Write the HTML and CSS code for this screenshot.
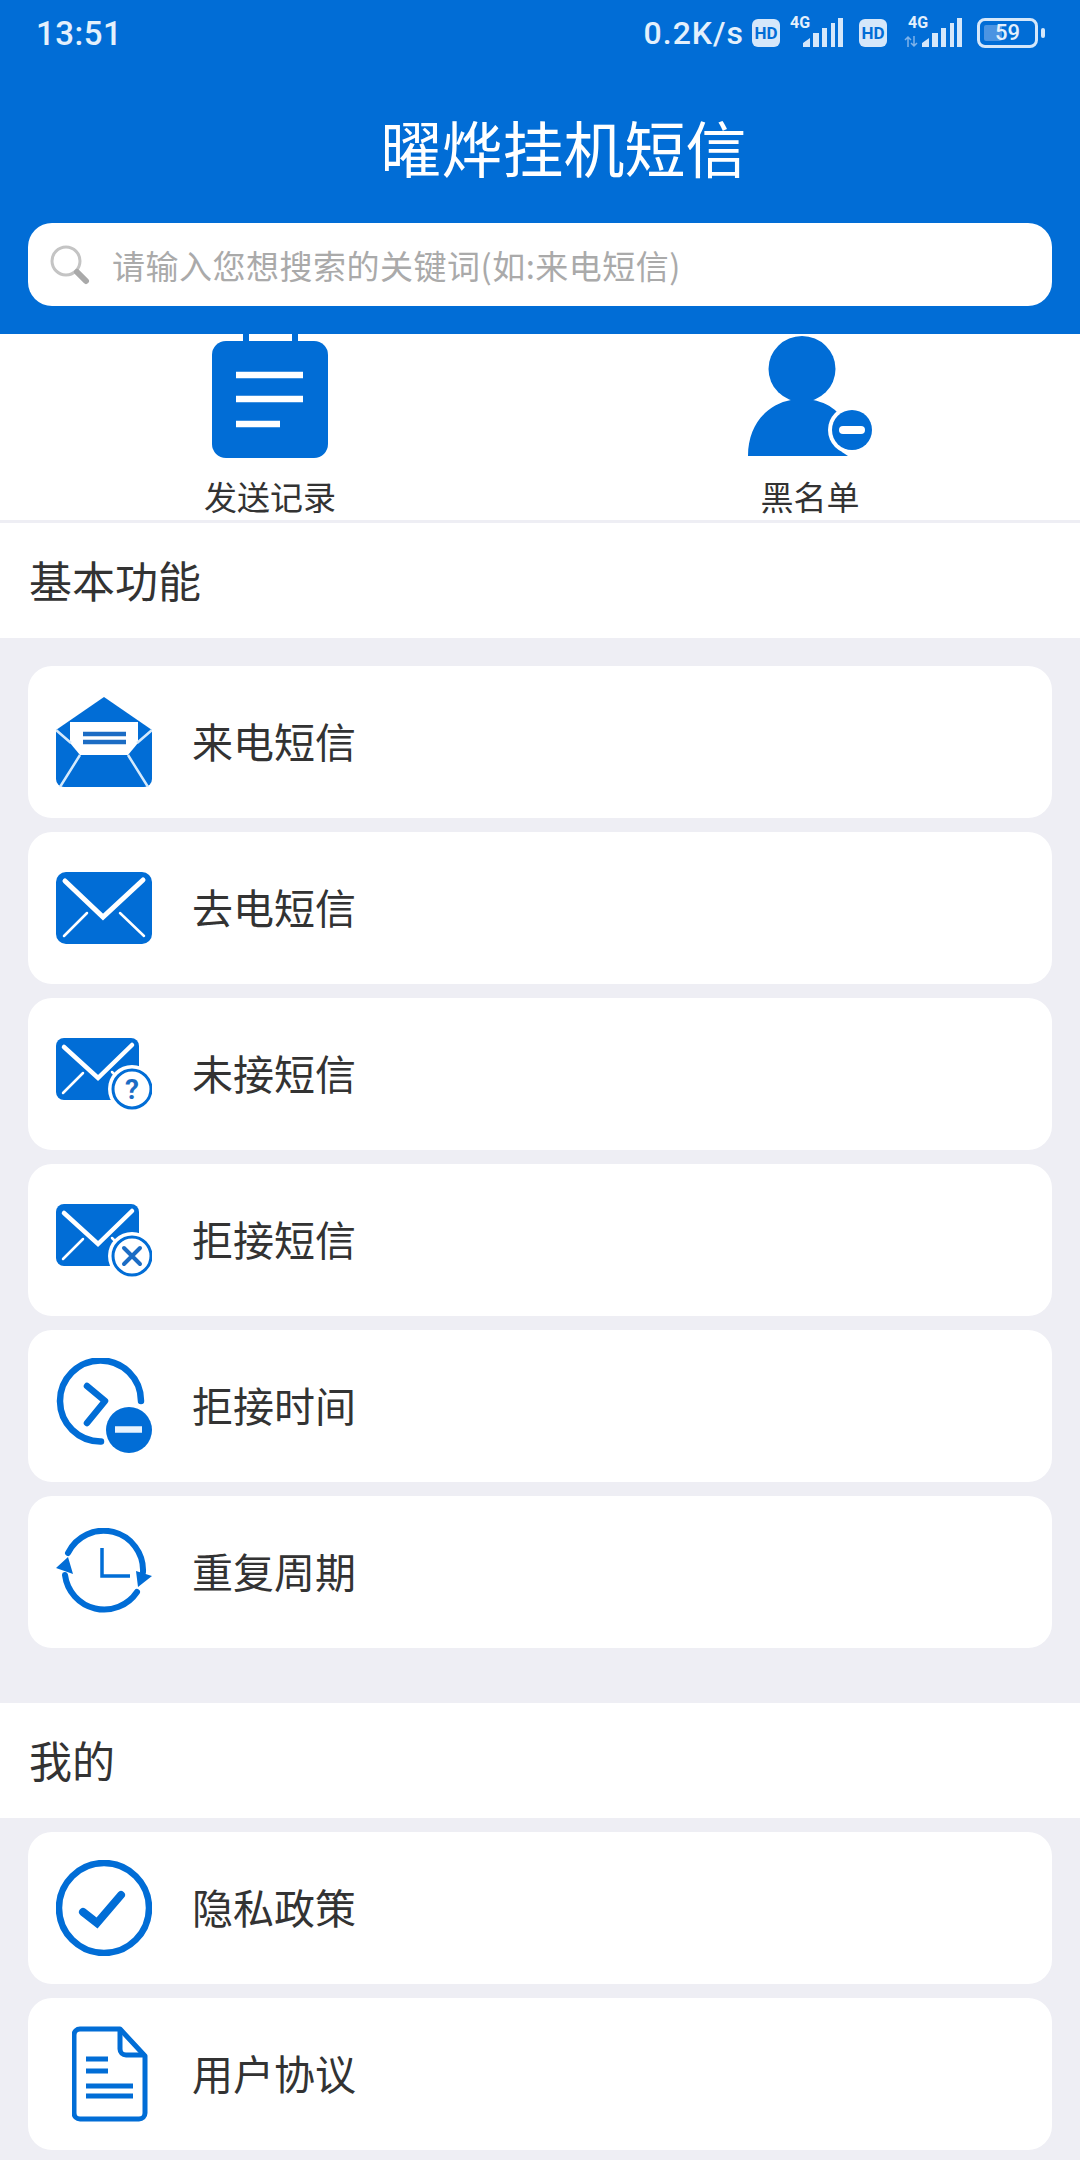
FILE: index.html
```html
<!DOCTYPE html>
<html lang="zh-CN">
<head>
    <meta charset="UTF-8">
    <meta name="viewport" content="width=device-width, initial-scale=1.0">
    <title>曜烨挂机短信</title>
    <link rel="stylesheet" href="styles.css">
</head>
<body>

    <div class="header">
        <div class="status-bar">
            <span class="clock">13:51</span>
            <div class="status-right">
                <span class="speed">0.2K/s</span>
                <span class="hd">HD</span>
                <svg class="signal" width="65" height="40" viewBox="0 0 65 40">
                    <text x="10" y="15" class="signal-text">4G</text>
                    <path d="M23 34v-4l7-5v9z M33 34V20h6v14z M42 34V15h5v19z M51 34V10h4v24z M58 34V5h5v29z" fill="#d5e7fa"/>
                </svg>
                <span class="hd hd-second">HD</span>
                <svg class="signal" width="78" height="40" viewBox="0 0 78 40">
                    <text x="21" y="15" class="signal-text">4G</text>
                    <path d="M21 34V24M18 27l3-3 3 3M27 23v10M24 30l3 3 3-3" fill="none" stroke="#7fb3ea" stroke-width="1.500"/>
                    <path d="M35 34v-4l7-5v9z M45 34V20h6v14z M54 34V15h5v19z M63 34V10h4v24z M70 34V5h5v29z" fill="#d5e7fa"/>
                </svg>
                <div class="battery">
                    <div class="battery-level"></div>
                    <span class="battery-num">59</span>
                </div>
                <div class="battery-nub"></div>
            </div>
        </div>
        <h1 class="app-title">曜烨挂机短信</h1>
        <div class="search-box">
            <svg class="search-icon" width="40" height="40" viewBox="0 0 40 40">
                <circle cx="16" cy="16" r="14" fill="none" stroke="#c4c4c4" stroke-width="3"/>
                <path d="M27 27l9 9" stroke="#a9a9a9" stroke-width="6" stroke-linecap="round"/>
            </svg>
            <span class="search-hint">请输入您想搜索的关键词(如:来电短信)</span>
        </div>
    </div>

    <div class="shortcuts">
        <div class="shortcut">
            <svg width="116" height="124" viewBox="0 0 116 124">
                <path class="blue-fill" d="M31 0h6v8h-6z M80 0h6v8h-6z"/>
                <rect class="blue-fill" x="0" y="7" width="116" height="117" rx="14"/>
                <path d="M24 41h67M24 65h67M24 90h44" stroke="#fff" stroke-width="6.500"/>
            </svg>
            <span class="shortcut-label">发送记录</span>
        </div>
        <div class="shortcut">
            <svg width="124" height="124" viewBox="0 0 124 124">
                <ellipse class="blue-fill" cx="54" cy="35" rx="33.500" ry="33"/>
                <path class="blue-fill" d="M0 122C0 90 20 70 43 66h22c10 2 18 6 24 12l5 40 6 4z"/>
                <circle cx="104" cy="96" r="24" fill="#fff"/>
                <circle class="blue-fill" cx="104" cy="96" r="20"/>
                <path d="M95 96h18" stroke="#fff" stroke-width="8" stroke-linecap="round"/>
            </svg>
            <span class="shortcut-label">黑名单</span>
        </div>
    </div>

    <div class="section-title">基本功能</div>
    <div class="card-list card-list-first">
        <div class="card">
            <svg class="card-icon" width="96" height="90" viewBox="0 0 96 90">
                <path class="blue-fill" d="M48 0L96 33V82a8 8 0 0 1-8 8H8a8 8 0 0 1-8-8V33z"/>
                <path d="M14 25H82V46L72 58H24L14 46z" fill="#fff"/>
                <path d="M27 37H70M27 45H70" stroke="#1b6cc4" stroke-width="4.500"/>
                <path d="M0 33L15 46M96 33L81 46M24 58L4 90M72 58L92 90" stroke="#d5eafc" stroke-width="2.500" fill="none"/>
            </svg>
            <span class="card-text">来电短信</span>
        </div>
        <div class="card">
            <svg class="card-icon" width="96" height="72" viewBox="0 0 96 72">
                <rect class="blue-fill" width="96" height="72" rx="10"/>
                <path d="M9 9L47 45L87 8" stroke="#fff" stroke-width="5" fill="none" stroke-linecap="round"/>
                <path d="M31 41L8 64M64 41L88 64" stroke="#fff" stroke-width="2.500" stroke-linecap="round"/>
            </svg>
            <span class="card-text">去电短信</span>
        </div>
        <div class="card">
            <svg class="card-icon card-icon-badge" width="96" height="76" viewBox="0 0 96 76">
                <rect class="blue-fill" width="83" height="62" rx="8"/>
                <path d="M8 9L42 40L76 7" stroke="#fff" stroke-width="4.500" fill="none" stroke-linecap="round"/>
                <path d="M27 35L7 55M56 34L62 40" stroke="#fff" stroke-width="2.500" stroke-linecap="round"/>
                <circle cx="76" cy="51" r="24" fill="#fff"/>
                <circle cx="76" cy="51" r="19" fill="#fff" stroke="#016dd6" stroke-width="3"/>
                <text x="76" y="61" class="badge-mark">?</text>
            </svg>
            <span class="card-text">未接短信</span>
        </div>
        <div class="card">
            <svg class="card-icon card-icon-badge" width="96" height="76" viewBox="0 0 96 76">
                <rect class="blue-fill" width="83" height="62" rx="8"/>
                <path d="M8 9L42 40L76 7" stroke="#fff" stroke-width="4.500" fill="none" stroke-linecap="round"/>
                <path d="M27 35L7 55M56 34L62 40" stroke="#fff" stroke-width="2.500" stroke-linecap="round"/>
                <circle cx="76" cy="52" r="24" fill="#fff"/>
                <circle cx="76" cy="52" r="19" fill="#fff" stroke="#016dd6" stroke-width="3"/>
                <path d="M68 44L84 60M84 44L68 60" stroke="#1b6cc4" stroke-width="4" stroke-linecap="round"/>
            </svg>
            <span class="card-text">拒接短信</span>
        </div>
        <div class="card">
            <svg class="card-icon" width="96" height="96" viewBox="0 0 96 96">
                <path d="M85 43A40.500 40.500 0 1 0 45 83.500" fill="none" stroke="#016dd6" stroke-width="6.500" stroke-linecap="round"/>
                <path d="M31 28L49 43L31 65" fill="none" stroke="#016dd6" stroke-width="6.500" stroke-linecap="round" stroke-linejoin="round"/>
                <circle class="blue-fill" cx="73" cy="72" r="23"/>
                <path d="M59 71.500H86" stroke="#e9f3fd" stroke-width="6.500"/>
            </svg>
            <span class="card-text">拒接时间</span>
        </div>
        <div class="card">
            <svg class="card-icon" width="96" height="88" viewBox="0 0 96 88">
                <path d="M12 25A39.500 39.500 0 0 1 87 44M81 64A39.500 39.500 0 0 1 9 47" fill="none" stroke="#016dd6" stroke-width="6" stroke-linecap="round"/>
                <path class="blue-fill" d="M0 40L12 29L17 46z M80 43L96 48L82 59z"/>
                <path d="M46 20V48H74" fill="none" stroke="#016dd6" stroke-width="3.500"/>
            </svg>
            <span class="card-text">重复周期</span>
        </div>
    </div>

    <div class="section-title section-title-mine">我的</div>
    <div class="card-list">
        <div class="card">
            <svg class="card-icon" width="96" height="96" viewBox="0 0 96 96">
                <circle cx="48" cy="48" r="45" fill="none" stroke="#016dd6" stroke-width="6.500"/>
                <path d="M27 52L41 63L65 35" fill="none" stroke="#016dd6" stroke-width="8" stroke-linecap="round"/>
            </svg>
            <span class="card-text">隐私政策</span>
        </div>
        <div class="card">
            <div class="card-icon doc-slot">
                <svg width="76" height="96" viewBox="0 0 76 96">
                    <path d="M8 3H48L73 30V87a6 6 0 0 1-6 6H8a6 6 0 0 1-6-6V9a6 6 0 0 1 6-6z" fill="none" stroke="#016dd6" stroke-width="5" stroke-linejoin="round"/>
                    <path d="M48 3V23a6 6 0 0 0 6 6H73" fill="none" stroke="#016dd6" stroke-width="5"/>
                    <path d="M14 33H36M14 45H36M14 60H61M14 70H61" stroke="#016dd6" stroke-width="5"/>
                </svg>
            </div>
            <span class="card-text">用户协议</span>
        </div>
    </div>

</body>
</html>
```

FILE: styles.css
```css
* {
    box-sizing: border-box;
    font-family: "Noto Sans CJK SC", "Noto Sans", sans-serif;
}
body {
    width: 1080px;
    height: 2160px;
    margin: 0;
    overflow: hidden;
    background-color: #eeeef4;
}
.blue-fill {
    fill: #016dd6;
}

/* header */
.header {
    height: 334px;
    padding: 0 28px;
    background-color: #016dd6;
}
.status-bar {
    display: flex;
    justify-content: space-between;
    align-items: center;
    height: 66px;
    padding-left: 8px;
    color: #e4f0fc;
}
.clock, .speed {
    font-family: Roboto, sans-serif;
    font-weight: 500;
    font-size: 33px;
    letter-spacing: 0.5px;
}
.status-right {
    display: flex;
    align-items: center;
    padding-right: 7px;
}
.speed {
    font-size: 32px;
    letter-spacing: 1px;
}
.hd {
    display: flex;
    align-items: center;
    justify-content: center;
    width: 28px;
    height: 28px;
    margin-left: 8px;
    border-radius: 6px;
    background-color: #d5e7fa;
    color: #016dd6;
    font-family: Roboto, sans-serif;
    font-weight: 700;
    font-size: 17px;
}
.hd-second {
    margin-left: 14px;
}
.signal-text {
    fill: #e4f0fc;
    font-family: Roboto, sans-serif;
    font-weight: 700;
    font-size: 16px;
}
.battery {
    position: relative;
    width: 61px;
    height: 30px;
    margin-left: 12px;
    border: 3px solid #d5e7fa;
    border-radius: 8px;
}
.battery-level {
    position: absolute;
    top: 4px;
    left: 4px;
    width: 18px;
    height: 16px;
    border-radius: 2px;
    background-color: #4b94e2;
}
.battery-num {
    position: absolute;
    top: 0;
    left: 15px;
    color: #e4f0fc;
    font-family: Roboto, sans-serif;
    font-weight: 500;
    font-size: 22px;
    line-height: 24px;
}
.battery-nub {
    width: 4px;
    height: 10px;
    margin-left: 3px;
    border-radius: 2px;
    background-color: #d5e7fa;
}
.app-title {
    margin: 51px 0 46px;
    padding-left: 47px;
    color: #ffffff;
    font-weight: 400;
    font-size: 61px;
    line-height: 60px;
    text-align: center;
}
.search-box {
    display: flex;
    align-items: center;
    height: 83px;
    padding-left: 22px;
    border-radius: 24px;
    background-color: #ffffff;
}
.search-icon {
    flex-shrink: 0;
}
.search-hint {
    margin-left: 22px;
    color: #aaaaaa;
    font-size: 33px;
    line-height: 40px;
    letter-spacing: 0.5px;
}

/* two shortcuts under the header */
.shortcuts {
    display: grid;
    grid-template-columns: 1fr 1fr;
    height: 186px;
    background-color: #ffffff;
}
.shortcut {
    display: flex;
    flex-direction: column;
    align-items: center;
}
.shortcut-label {
    margin-top: 22px;
    color: #333333;
    font-size: 33px;
    line-height: 32px;
}
.section-title {
    display: flex;
    align-items: center;
    height: 115px;
    margin-top: 3px;
    padding: 0 0 3px 29px;
    background-color: #ffffff;
    color: #333333;
    font-size: 43px;
}
.section-title-mine {
    margin-top: 55px;
}

/* cards */
.card-list {
    display: flex;
    flex-direction: column;
    gap: 14px;
    padding: 14px 28px 0;
}
.card-list-first {
    padding-top: 28px;
}
.card {
    display: flex;
    align-items: center;
    height: 152px;
    padding-left: 28px;
    border-radius: 24px;
    background-color: #ffffff;
}
.card-icon {
    flex-shrink: 0;
}
.card-icon-badge {
    margin-top: 4px;
}
.doc-slot {
    display: flex;
    justify-content: center;
    width: 96px;
    padding-left: 11px;
}
.card-text {
    margin-left: 40px;
    padding-bottom: 4px;
    color: #333333;
    font-size: 41px;
}
.badge-mark {
    fill: #1b6cc4;
    font-family: Roboto, sans-serif;
    font-weight: 700;
    font-size: 28px;
    text-anchor: middle;
}
```
